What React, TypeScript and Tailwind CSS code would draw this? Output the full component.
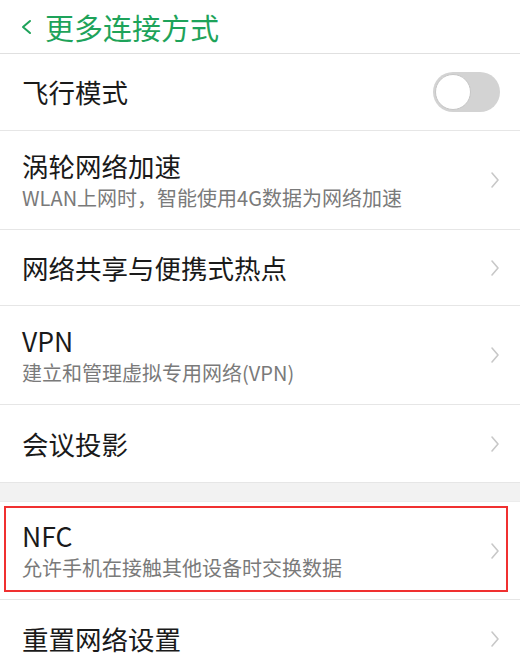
import React from "react";

const Chevron = () => (
  <svg width="10" height="18" viewBox="0 0 10 18" className="shrink-0">
    <polyline points="2,2 8,9 2,16" fill="none" stroke="#c8c8c8" strokeWidth="1.6" strokeLinecap="round" strokeLinejoin="round" />
  </svg>
);

function Row({ title, sub, h, last }: { title: string; sub?: string; h: string; last?: boolean }) {
  return (
    <div className={`flex items-center justify-between pl-[22px] pr-[20px] ${h} ${last ? "" : "border-b border-[#e6e6e6]"}`}>
      <div className="flex flex-col">
        <div className="text-[26.5px] leading-[32px] text-[#1a1a1a]">{title}</div>
        {sub && <div className="text-[20px] leading-[26px] mt-[3px] text-[#7a7a7a]">{sub}</div>}
      </div>
      <Chevron />
    </div>
  );
}

export default function App() {
  return (
    <div
      className="w-[520px] h-[662px] overflow-hidden bg-white"
      style={{ fontFamily: '"Noto Sans CJK SC", "Noto Sans", sans-serif' }}
    >
      <div className="h-[54px] flex items-center border-b border-[#e0e0e0] pl-[20px]">
        <svg width="14" height="18" viewBox="0 0 14 18" className="shrink-0">
          <polyline points="10,3 3,9 10,15" fill="none" stroke="#1ea35a" strokeWidth="2" strokeLinecap="round" strokeLinejoin="round" />
        </svg>
        <div className="ml-[11px] text-[29px] leading-[36px] text-[#1ea35a]">更多连接方式</div>
      </div>

      <div className="h-[77px] flex items-center justify-between pl-[22px] pr-[20px] border-b border-[#e6e6e6]">
        <div className="text-[26.5px] leading-[32px] text-[#1a1a1a]">飞行模式</div>
        <div className="relative w-[67px] h-[40px] rounded-full bg-[#d3d3d3]">
          <div className="absolute left-[2px] top-[2px] w-[36px] h-[36px] rounded-full bg-white border border-[#c6c6c6]" />
        </div>
      </div>

      <Row title="涡轮网络加速" sub="WLAN上网时，智能使用4G数据为网络加速" h="h-[99px]" />
      <Row title="网络共享与便携式热点" h="h-[76px]" />
      <Row title="VPN" sub="建立和管理虚拟专用网络(VPN)" h="h-[99px]" />
      <Row title="会议投影" h="h-[78px]" />

      <div className="h-[19px] bg-[#f2f2f2] border-b border-[#ececec]" />

      <div className="relative">
        <Row title="NFC" sub="允许手机在接触其他设备时交换数据" h="h-[98px]" />
        <div className="absolute left-[4px] top-[4px] w-[504px] h-[86px] border-2 border-[#f03030]" />
      </div>

      <Row title="重置网络设置" h="h-[77px]" last />
    </div>
  );
}
